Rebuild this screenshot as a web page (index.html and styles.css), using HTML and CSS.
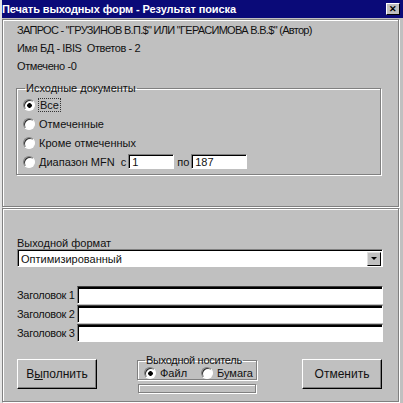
FILE: index.html
```html
<!DOCTYPE html>
<html>
<head>
<meta charset="utf-8">
<link rel="stylesheet" href="styles.css">
</head>
<body>
<div class="window">
  <div class="titlebar">
    <span class="title">Печать выходных форм - Результат поиска</span>
    <span class="close">✕</span>
  </div>
  <div class="panel top">
    <div class="line first">ЗАПРОС - "ГРУЗИНОВ В.П.$" ИЛИ "ГЕРАСИМОВА В.В.$" (Автор)</div>
    <div class="line">Имя БД - IBIS&nbsp; Ответов - 2</div>
    <div class="line">Отмечено -0</div>
    <fieldset class="group docs">
      <legend>Исходные документы</legend>
      <div class="opt"><span class="radio on"></span><span class="focus">Все</span></div>
      <div class="opt"><span class="radio"></span>Отмеченные</div>
      <div class="opt"><span class="radio"></span>Кроме отмеченных</div>
      <div class="opt"><span class="radio"></span>Диапазон MFN <span class="from">с</span><span class="field w1">1</span><span class="to">по</span><span class="field w2">187</span></div>
    </fieldset>
  </div>
  <div class="panel bottom">
    <div class="lbl">Выходной формат</div>
    <div class="select"><span class="sel-text">Оптимизированный</span><span class="arrow"><span class="tri"></span></span></div>
    <div class="heads">
      <div class="hrow"><span class="hl">Заголовок 1</span><span class="field wide"></span></div>
      <div class="hrow"><span class="hl">Заголовок 2</span><span class="field wide"></span></div>
      <div class="hrow"><span class="hl">Заголовок 3</span><span class="field wide"></span></div>
    </div>
    <div class="actions">
      <div class="btn">В<u>ы</u>полнить</div>
      <div class="carrier">
        <fieldset class="group media">
          <legend>Выходной носитель</legend>
          <div class="mrow">
            <span class="mopt file"><span class="radio on"></span>Файл</span>
            <span class="mopt"><span class="radio"></span>Бумага</span>
          </div>
        </fieldset>
        <div class="strip"></div>
      </div>
      <div class="btn cancel">Отменить</div>
    </div>
  </div>
</div>
</body>
</html>
```
FILE: styles.css
```css
html, body {
  margin: 0;
  padding: 0;
  background: #c0c0c0;
}
.window {
  width: 403px;
  height: 403px;
  background: #c0c0c0;
  font-family: "Liberation Sans", Arial, sans-serif;
  font-size: 11px;
  color: #111;
  overflow: hidden;
  box-sizing: border-box;
  border-left: 2px solid #e4e4e4;
}
.titlebar {
  height: 18px;
  background: #0a0a78;
  display: flex;
  align-items: center;
  justify-content: space-between;
  padding: 0 3px 0 2px;
  margin-left: -2px;
}
.title {
  color: #fff;
  font-weight: bold;
  font-size: 11px;
  letter-spacing: -0.1px;
}
.close {
  width: 14px;
  height: 12px;
  box-sizing: border-box;
  background: #c0c0c0;
  border: 1px solid;
  border-color: #fff #000 #000 #fff;
  color: #000;
  font-size: 9px;
  font-weight: bold;
  line-height: 10px;
  text-align: center;
}
.panel {
  border: 1px solid #808080;
  box-shadow: inset 1px 1px 0 #fff, 1px 1px 0 #fff;
  margin: 1px 4px 0 0;
}
.panel.top {
  height: 188px;
  box-sizing: border-box;
  padding: 1px 17px 0 13px;
}
.line {
  height: 18px;
  line-height: 18px;
  padding-left: 1px;
  letter-spacing: -0.4px;
  white-space: nowrap;
}
.line.first {
  letter-spacing: -0.7px;
}
.group {
  margin: 0;
  padding: 0;
  border: 1px solid #808080;
  box-shadow: inset 1px 1px 0 #fff, 1px 1px 0 #fff;
  min-width: 0;
}
.group legend {
  padding: 0 1px;
  margin-left: 2px;
  line-height: 13px;
}
.docs {
  margin-top: 7px;
  padding: 0 0 3px 6px;
}
.opt {
  height: 19px;
  display: flex;
  align-items: center;
  white-space: nowrap;
}
.radio {
  width: 12px;
  height: 12px;
  box-sizing: border-box;
  border-radius: 50%;
  border: 1px solid;
  border-color: #808080 #fff #fff #808080;
  box-shadow: inset 1px 1px 0 #303030;
  background: #fff;
  margin-right: 4px;
  flex: none;
}
.radio.on {
  background: radial-gradient(circle at 55% 55%, #000 0 2px, #fff 2.6px);
}
.focus {
  outline: 1px dotted #333;
  outline-offset: 0;
  padding: 0 1px;
}
.field {
  display: block;
  height: 15px;
  box-sizing: border-box;
  background: #fff;
  border: 1px solid;
  border-color: #808080 #fff #fff #808080;
  box-shadow: inset 1px 1px 0 #000;
  padding: 1px 0 0 3px;
  line-height: 12px;
}
.from { margin-left: 6px; }
.w1 { width: 46px; margin-left: 2px; }
.to { margin-left: 3px; }
.w2 { width: 56px; margin-left: 2px; }
.panel.bottom {
  margin-top: 1px;
  height: 194px;
  box-sizing: border-box;
  padding: 28px 15px 0 14px;
}
.lbl {
  line-height: 12px;
  height: 12px;
}
.select {
  height: 18px;
  box-sizing: border-box;
  background: #fff;
  border: 1px solid;
  border-color: #808080 #fff #fff #808080;
  box-shadow: inset 1px 1px 0 #000;
  display: flex;
  align-items: center;
  justify-content: space-between;
  padding: 1px 1px 0 3px;
}
.arrow {
  width: 14px;
  height: 14px;
  box-sizing: border-box;
  background: #c0c0c0;
  border: 1px solid;
  border-color: #e0e0e0 #000 #000 #e0e0e0;
  display: flex;
  align-items: center;
  justify-content: center;
}
.tri {
  width: 0;
  height: 0;
  border-left: 3px solid transparent;
  border-right: 3px solid transparent;
  border-top: 3px solid #000;
}
.heads {
  margin-top: 19px;
  display: flex;
  flex-direction: column;
  gap: 1px;
}
.hrow {
  display: flex;
  align-items: center;
  height: 18px;
}
.hl {
  width: 60px;
  flex: none;
  white-space: nowrap;
  letter-spacing: -0.3px;
}
.field.wide {
  flex: 1;
  height: 18px;
  border-top-color: #404040;
  box-shadow: inset 1px 1px 0 #000, inset 0 2px 0 #000;
}
.actions {
  margin-top: 17px;
  display: flex;
  align-items: flex-start;
}
.btn {
  width: 80px;
  height: 30px;
  box-sizing: border-box;
  border: 1px solid;
  border-color: #fff #000 #000 #fff;
  box-shadow: inset -1px -1px 0 #808080;
  display: flex;
  align-items: center;
  justify-content: center;
  font-size: 12px;
}
.btn.cancel { margin-left: 45px; }
.carrier {
  width: 120px;
  margin-left: 40px;
  margin-top: -5px;
}
.media {
  padding: 0 0 2px 6px;
  height: 26px;
  box-sizing: border-box;
}
.media legend {
  margin-left: 1px;
  letter-spacing: -0.3px;
}
.mrow {
  display: flex;
  align-items: center;
  height: 12px;
}
.mopt {
  display: flex;
  align-items: center;
  width: 52px;
}
.mopt.file { width: 57px; }
.mopt .radio { margin-right: 4px; }
.strip {
  margin: 4px 1px 0;
  height: 7px;
  border: 1px solid #808080;
  box-shadow: inset 1px 1px 0 #fff, 1px 1px 0 #fff;
}
```
